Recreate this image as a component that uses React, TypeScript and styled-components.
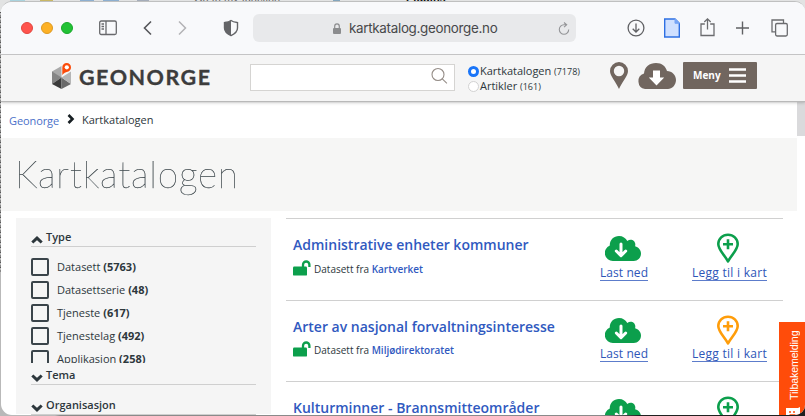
import React from "react";
import styled, { createGlobalStyle } from "styled-components";

const GlobalStyle = createGlobalStyle`
  * { box-sizing: border-box; }
  html, body { margin: 0; overflow: hidden; }
  body { font-family: "Open Sans", "Noto Sans", sans-serif; color: #2d373c; }
  svg { display: block; flex: none; }
`;

const Desktop = styled.div`
  position: relative;
  width: 805px;
  height: 416px;
  overflow: hidden;
  padding: 1px 0 1px 1px;
  background: linear-gradient(90deg, #b9b9b9 0 55px, #8a8a8a 60px 600px, #202020 640px);
`;

const Behind = styled.div`
  position: absolute;
  inset: 0 0 auto 0;
  height: 12px;
  overflow: hidden;
  background: #e2e3e3;
`;

const BehindLeft = styled.div`
  position: absolute;
  top: 12px;
  left: 0;
  width: 1px;
  height: 260px;
  background: repeating-linear-gradient(#555 0 1px, #bbb 1px 3px, #888 3px 5px);
`;

const BehindChip = styled.i<{ $x: number; $w: number; $c: string }>`
  position: absolute;
  left: ${(p) => p.$x}px;
  top: 0;
  width: ${(p) => p.$w}px;
  height: 2px;
  background: ${(p) => p.$c};
`;

const BehindText = styled.span<{ $x: number; $bold?: boolean }>`
  position: absolute;
  left: ${(p) => p.$x}px;
  top: -8px;
  font: ${(p) => (p.$bold ? 700 : 400)} 11px/12px "Liberation Sans", sans-serif;
  color: ${(p) => (p.$bold ? "#111" : "#666")};
  white-space: nowrap;
`;

const Window = styled.div`
  position: relative;
  height: 414px;
  overflow: hidden;
  background: #fff;
  border-top: 1px solid #bfc0c0;
  border-radius: 11px 10px 10px 11px;
`;

const Toolbar = styled.div`
  display: flex;
  align-items: center;
  height: 53px;
  padding: 0 17px 0 20px;
  background: #f8f9fb;
  border-bottom: 1px solid #c6c6c7;
  color: #626366;
`;

const Lights = styled.div`
  display: flex;
  gap: 8px;
  width: 78px;
`;

const Light = styled.i<{ $c: string; $b: string }>`
  width: 12px;
  height: 12px;
  border-radius: 50%;
  background: ${(p) => p.$c};
  border: 1px solid ${(p) => p.$b};
`;

const NavIcons = styled.div`
  display: flex;
  align-items: center;
  width: 154px;
`;

const Gap = styled.span<{ $w: number }>`
  flex: none;
  width: ${(p) => p.$w}px;
`;

const AddressBar = styled.div`
  display: flex;
  align-items: center;
  width: 323px;
  height: 28px;
  padding: 0 6px 0 80px;
  border-radius: 6px;
  background: #e8e9eb;
`;

const Address = styled.span`
  flex: 1;
  padding: 0 0 0 8px;
  font: 400 13.4px/20px Inter, sans-serif;
  letter-spacing: -0.3px;
  color: #47484a;
`;

const ToolIcons = styled.div`
  display: flex;
  align-items: center;
  flex: 1;
  padding-left: 51px;
`;

const Header = styled.header`
  position: relative;
  z-index: 1;
  display: flex;
  align-items: flex-start;
  height: 46px;
  padding: 7px 0 0 49px;
  background: #f5f5f5;
  box-shadow: 0 1px 1px #b9b9b9, 0 2px 3px rgba(0, 0, 0, 0.18);
`;

const Logo = styled.div`
  display: flex;
  width: 200px;
  height: 34px;
`;

const LogoName = styled.span`
  padding-left: 5px;
  font: 700 21.5px/30px Lato, sans-serif;
  letter-spacing: 1.5px;
  color: #3c3c3c;
  -webkit-text-stroke: 0.3px #3c3c3c;
`;

const SearchBox = styled.div`
  display: flex;
  justify-content: flex-end;
  width: 205px;
  height: 27px;
  margin-top: 2px;
  padding: 2px 6px 0 0;
  border: 1px solid #d5d4d2;
  background: #fff;
`;

const Choices = styled.div`
  width: 141px;
  margin: 1px 0 0 13px;
`;

const Choice = styled.div`
  display: flex;
  align-items: center;
  height: 15px;
  font-size: 11px;
  letter-spacing: -0.02px;
  white-space: pre;
  small { font-size: 9px; letter-spacing: 0; padding-top: 1px; }
`;

const Radio = styled.i<{ $on?: boolean }>`
  width: 11px;
  height: 11px;
  margin: 1px 1px 0 0;
  border-radius: 50%;
  background: #fff;
  border: ${(p) => (p.$on ? "3px solid #1a75f8" : "1px solid #d2d2d2")};
`;

const MenuButton = styled.div`
  display: flex;
  align-items: center;
  gap: 8px;
  width: 74px;
  height: 27px;
  margin-left: 7px;
  padding: 0 0 1px 10px;
  border-radius: 1px;
  background: #71665f;
  color: #fff;
  font-size: 10px;
  font-weight: 700;
`;

const Page = styled.main`
  position: relative;
  width: 796px;
`;

const ScrollThumb = styled.div`
  position: absolute;
  left: 796px;
  top: 99px;
  width: 9px;
  height: 35px;
  background: #dadadc;
`;

const Breadcrumb = styled.nav`
  display: flex;
  align-items: center;
  height: 37px;
  padding: 0 0 1px 8px;
  font-size: 11px;
  a { color: #4a70c9; padding-top: 2px; width: 58px; letter-spacing: -0.1px; }
  span { padding-left: 7px; }
`;

const TitleBand = styled.div`
  height: 73px;
  padding: 12px 0 0 14px;
  background: #f6f6f5;
`;

const Title = styled.h1`
  margin: 0;
  font: 100 37px/47px Lato, sans-serif;
  letter-spacing: 0.75px;
  color: #3c464b;
  -webkit-text-stroke: 0.25px #3c464b;
  will-change: transform;
`;

const Columns = styled.div`
  display: flex;
  gap: 15px;
  padding: 7px 14px 0 15px;
`;

const Sidebar = styled.aside`
  width: 255px;
  height: 196px;
  padding: 7px 15px 0;
  background: #f5f5f5;
`;

const FacetTitle = styled.div`
  display: flex;
  align-items: flex-start;
  gap: 3px;
  height: 22px;
  padding-top: 4px;
  border-bottom: 1px solid #cfcfcf;
  font-size: 11px;
  font-weight: 600;
  line-height: 15px;
  svg { margin-top: 7px; }
`;

const FacetList = styled.div`
  height: 116px;
  padding-top: 8px;
  overflow: hidden;
`;

const Facet = styled.label`
  display: flex;
  align-items: center;
  height: 23px;
  font-size: 11px;
  white-space: pre;
  b { font-weight: 700; }
`;

const Check = styled.i`
  width: 18px;
  height: 18px;
  margin: 0 8px 0 0;
  border: 2px solid #3a444a;
  border-radius: 2px;
`;

const FacetGap = styled.div`
  height: 8px;
`;

const Results = styled.section`
  width: 497px;
`;

const Result = styled.article<{ $h: number }>`
  display: flex;
  height: ${(p) => p.$h}px;
  padding-left: 7px;
  border-top: 1px solid #d0d0d0;
`;

const ResultMain = styled.div`
  width: 303px;
  padding-top: 16px;
`;

const ResultTitle = styled.div`
  font-size: 14px;
  font-weight: 600;
  line-height: 20px;
  color: #3059c0;
  white-space: nowrap;
`;

const ResultMeta = styled.div<{ $top: number }>`
  display: flex;
  align-items: flex-start;
  gap: 3px;
  padding-top: ${(p) => p.$top}px;
  font-size: 10px;
  line-height: 17px;
  white-space: pre;
  b { font-weight: 600; color: #3059c0; }
  svg { margin-top: -1px; }
`;

const Action = styled.div<{ $w: number; $m: number; $gap: number }>`
  display: flex;
  flex-direction: column;
  align-items: center;
  width: ${(p) => p.$w}px;
  margin-left: ${(p) => p.$m}px;
  padding-top: 13px;
  svg { height: 31px; margin-bottom: ${(p) => p.$gap}px; }
`;

const ActionLink = styled.a<{ $spacing: number; $shift: number }>`
  height: 16px;
  margin-left: ${(p) => p.$shift}px;
  border-bottom: 1px solid #5c7ccb;
  font-size: 12px;
  line-height: 15px;
  letter-spacing: ${(p) => p.$spacing}px;
  color: #2e56b8;
  white-space: nowrap;
`;

const Feedback = styled.div`
  position: absolute;
  left: 778px;
  top: 320px;
  display: flex;
  flex-direction: column;
  align-items: center;
  gap: 7px;
  width: 27px;
  height: 95px;
  padding-top: 9px;
  background: #ff4c0a;
  color: #fff;
  span {
    writing-mode: vertical-rl;
    transform: rotate(180deg);
    font: 400 10.6px/16px "Liberation Sans", sans-serif;
    letter-spacing: -0.1px;
    margin-left: 3px;
    height: 69px;
  }
`;

const GREEN = "#0c9f4c";
const INK = "#2d373c";

function Chevron({ up }: { up?: boolean }) {
  return (
    <svg width="12" height="8" viewBox="0 0 12 8">
      <path d={up ? "M1.3 6.5 6 2.1l4.7 4.4" : "M1.3 1.5 6 5.9l4.7-4.4"} fill="none" stroke={INK} strokeWidth="3" />
    </svg>
  );
}

function OpenLock() {
  return (
    <svg width="18" height="16" viewBox="0 0 18 16">
      <rect x="0" y="6.6" width="14" height="9" rx="1.2" fill={GREEN} />
      <path d="M10 7.400V4.700a3.200 3.200 0 0 1 6.400 0V7" fill="none" stroke={GREEN} strokeWidth="2.300" />
    </svg>
  );
}

function CloudDownload() {
  return (
    <svg width="36" height="31" viewBox="0 0 36 31">
      <path d="M8 29a8 8 0 0 1-3.2-15.4C4.5 8.2 8.6 4 14 4c3.8 0 6.8 2 8.3 5 4-3.2 9.2.3 7.8 5.2C33.500 15 36 18 36 21.500 36 25.800 32.800 29 28.800 29Z" fill={GREEN} />
      <path d="M16 12v11M11.300 19l4.700 4.700 4.700-4.700" fill="none" stroke="#fff" strokeWidth="3" strokeLinecap="round" strokeLinejoin="round" />
    </svg>
  );
}

function MapPin({ color }: { color: string }) {
  return (
    <svg width="22" height="31" viewBox="0 0 22 31">
      <path d="M11 29.500C8 23.500 1.300 18 1.300 12a9.700 9.300 0 0 1 19.400 0C20.700 18 14 23.500 11 29.500Z" fill="none" stroke={color} strokeWidth="2.600" strokeLinejoin="round" />
      <path d="M11 7.300v10M6 12.300h10" stroke={color} strokeWidth="2.600" />
    </svg>
  );
}

function GeoLogo() {
  return (
    <svg width="24" height="30" viewBox="0 0 24 30">
      <path d="M11.500 4 2 9.500v7l9.500-.5Z" fill="#a9a9a9" />
      <path d="M2 9.500V22l9.500-6.500Z" fill="#858585" />
      <path d="M2 22l9.500 5V15.500Z" fill="#3b3b3b" />
      <path d="M11.500 15.500V27l9.500-5Z" fill="#696969" />
      <path d="M11.500 15.500 21 9.500V22Z" fill="#b5b5b5" />
      <path d="M12.300 13.300V5.500C12.300 2.500 14.300 1 16.700 1s4.300 1.800 4.300 4.200c0 3.500-3 4.500-5 5.100-1.800.6-2.800 1.500-3.700 3Z" fill="#fb4b0a" />
      <circle cx="16.800" cy="5.300" r="2.100" fill="#fff" />
    </svg>
  );
}

const facets: [string, number][] = [
  ["Datasett", 5763],
  ["Datasettserie", 48],
  ["Tjeneste", 617],
  ["Tjenestelag", 492],
  ["Applikasjon", 258],
];

const results = [
  { title: "Administrative enheter kommuner", owner: "Kartverket", pin: GREEN, height: 82 },
  { title: "Arter av nasjonal forvaltningsinteresse", owner: "Miljødirektoratet", pin: "#ff9d0a", height: 81 },
  { title: "Kulturminner - Brannsmitteområder", owner: "", pin: GREEN, height: 82 },
];

export default function App() {
  return (
    <Desktop>
      <GlobalStyle />
      <Behind>
        <BehindChip $x={10} $w={15} $c="#a9d3de" />
        <BehindChip $x={40} $w={13} $c="#c9b765" />
        <BehindChip $x={80} $w={14} $c="#8dafd0" />
        <BehindChip $x={103} $w={16} $c="#8dafd0" />
        <BehindChip $x={137} $w={12} $c="#a5adba" />
        <BehindText $x={194}>Go to my function</BehindText>
        <BehindChip $x={333} $w={7} $c="#83a5bd" />
        <BehindText $x={406} $bold>Plugins</BehindText>
      </Behind>
      <BehindLeft />
      <Window>
        <Toolbar>
          <Lights>
            <Light $c="#ff544d" $b="#e2463f" />
            <Light $c="#fdb125" $b="#dd9a22" />
            <Light $c="#22c235" $b="#18a82a" />
          </Lights>
          <NavIcons>
            <svg width="18" height="16" viewBox="0 0 18 16" fill="none" stroke="#68696c" strokeWidth="1.300">
              <rect x=".7" y="1" width="16.600" height="13.500" rx="1.500" />
              <path d="M7 1v13.500M2.500 4h2.500M2.500 6.500h2.500M2.500 9h2.500" />
            </svg>
            <Gap $w={26} />
            <svg width="9" height="16" viewBox="0 0 9 16" fill="none" stroke="#55565a" strokeWidth="1.600"><path d="M8 1.500 1.500 8 8 14.500" /></svg>
            <Gap $w={26} />
            <svg width="9" height="16" viewBox="0 0 9 16" fill="none" stroke="#b2b3b6" strokeWidth="1.500"><path d="M1 1.500 7.500 8 1 14.500" /></svg>
            <Gap $w={36} />
            <svg width="16" height="18" viewBox="0 0 16 18">
              <path d="M8 1.500C6 3 3.500 3.300 1.500 3.600V9c0 3.500 3 6 6.500 7.600C11.500 15 14.500 12.500 14.500 9V3.600C12.500 3.300 10 3 8 1.500Z" fill="none" stroke="#646568" strokeWidth="1.400" />
              <path d="M8 1.500C6 3 3.500 3.300 1.500 3.600V9c0 3.500 3 6 6.500 7.600Z" fill="#646568" />
            </svg>
          </NavIcons>
          <AddressBar>
            <svg width="8" height="11" viewBox="0 0 8 11"><rect y="5" width="8" height="6" rx="1" fill="#8b8c8e" /><path d="M1.700 5.500V3.200a2.300 2.300 0 0 1 4.600 0v2.300" fill="none" stroke="#8b8c8e" strokeWidth="1.200" /></svg>
            <Address>kartkatalog.geonorge.no</Address>
            <svg width="12" height="13" viewBox="0 0 12 13" fill="none" stroke="#949598" strokeWidth="1.100"><path d="M10.700 7.500a4.700 4.700 0 1 1-4.700-4.700h2.500M6 .5l2.700 2.300L6 5.200" /></svg>
          </AddressBar>
          <ToolIcons>
            <svg width="18" height="18" viewBox="0 0 18 18" fill="none" stroke="#606164" strokeWidth="1.300"><circle cx="9" cy="9" r="7.900" /><path d="M9 4.500v8.500M5.700 9.800 9 13l3.300-3.200" /></svg>
            <Gap $w={19} />
            <svg width="16" height="20" viewBox="0 0 16 20"><path d="M.7 1h10.300l4.300 4.300V19H.7Z" fill="#cfe0ff" stroke="#2e70e3" strokeWidth="1.400" /><path d="M11 1v4.300h4.300Z" fill="#77a5f5" stroke="#77a5f5" /></svg>
            <Gap $w={20} />
            <svg width="15" height="20" viewBox="0 0 15 20" fill="none" stroke="#6b6c6f" strokeWidth="1.300"><path d="M4.800 6H1v11.500h13V6h-3.800M7.500 11.500V.8M4.300 4 7.500.9 10.700 4" /></svg>
            <Gap $w={21} />
            <svg width="13" height="14" viewBox="0 0 13 14" stroke="#606164" strokeWidth="1.400"><path d="M6.500.5v13M0 7h13" /></svg>
            <Gap $w={22} />
            <svg width="17" height="18" viewBox="0 0 17 18" fill="none" stroke="#6b6c6f" strokeWidth="1.300"><path d="M4.500 12.800H1V1h11.500v3.500" /><rect x="4.600" y="4.500" width="11.700" height="12.500" rx="1.400" /></svg>
          </ToolIcons>
        </Toolbar>
        <Header>
          <Logo><GeoLogo /><LogoName>GEONORGE</LogoName></Logo>
          <SearchBox>
            <svg width="18" height="18" viewBox="0 0 18 18" fill="none" stroke="#958d87" strokeWidth="1.100"><circle cx="8" cy="7.500" r="6" /><path d="m12.300 11.800 4.600 4.500" /></svg>
          </SearchBox>
          <Choices>
            <Choice><Radio $on />Kartkatalogen <small>(7178)</small></Choice>
            <Choice><Radio />Artikler <small>(161)</small></Choice>
          </Choices>
          <Gap $w={1} />
          <svg width="18" height="27" viewBox="0 0 18 27"><path fillRule="evenodd" d="M9 0a9 9 0 0 1 9 9c0 5-6 11-9 18C6 20 0 14 0 9a9 9 0 0 1 9-9Zm0 3.800a5.200 5.200 0 1 0 0 10.400A5.200 5.200 0 0 0 9 3.800Z" fill="#71665f" /></svg>
          <Gap $w={9} />
          <svg width="39" height="27" viewBox="0 0 39 27"><path d="M8 27a8 8 0 0 1-1-15.500C7.500 5 12.500 1 19 1c6 0 9.500 3 11 8 5 0 9 4 9 9s-4 9-8 9Z" fill="#71665f" /><path d="M16 8.500h7v7h4.200L19.500 23.500l-7.700-8H16Z" fill="#fff" /></svg>
          <MenuButton>
            Meny
            <svg width="17" height="15" viewBox="0 0 17 15" stroke="#fff" strokeWidth="2.500"><path d="M0 1.500h17M0 7.500h17M0 13.500h17" /></svg>
          </MenuButton>
        </Header>
        <Page>
          <Breadcrumb>
            <a>Geonorge</a>
            <svg width="8" height="10" viewBox="0 0 8 10" fill="none" stroke="#171f23" strokeWidth="2.600"><path d="m1.500 1 4 4-4 4" /></svg>
            <span>Kartkatalogen</span>
          </Breadcrumb>
          <TitleBand><Title>Kartkatalogen</Title></TitleBand>
          <Columns>
            <Sidebar>
              <FacetTitle><Chevron up />Type</FacetTitle>
              <FacetList>
                {facets.map(([name, n]) => (
                  <Facet key={name}><Check />{name} <b>({n})</b></Facet>
                ))}
              </FacetList>
              <FacetTitle><Chevron />Tema</FacetTitle>
              <FacetGap />
              <FacetTitle><Chevron />Organisasjon</FacetTitle>
            </Sidebar>
            <Results>
              {results.map((r) => (
                <Result key={r.title} $h={r.height}>
                  <ResultMain>
                    <ResultTitle>{r.title}</ResultTitle>
                    {r.owner && (
                      <ResultMeta $top={r.height - 76}><OpenLock /><span>Datasett fra <b>{r.owner}</b></span></ResultMeta>
                    )}
                  </ResultMain>
                  <Action $w={60} $m={-3} $gap={r.height - 80}><CloudDownload /><ActionLink $spacing={0.08} $shift={2}>Last ned</ActionLink></Action>
                  <Action $w={80} $m={35} $gap={r.height - 80}><MapPin color={r.pin} /><ActionLink $spacing={0.28} $shift={3}>Legg til i kart</ActionLink></Action>
                </Result>
              ))}
            </Results>
          </Columns>
        </Page>
        <ScrollThumb />
        <Feedback>
          <span>Tilbakemelding</span>
          <svg width="14" height="12" viewBox="0 0 14 12"><path d="M0 1h12l2-1v12H0Z" fill="#fff" /><path d="M4 4v2M8 4v2M3.500 8h6" stroke="#ff4c0a" strokeWidth="1.500" /></svg>
        </Feedback>
      </Window>
    </Desktop>
  );
}
